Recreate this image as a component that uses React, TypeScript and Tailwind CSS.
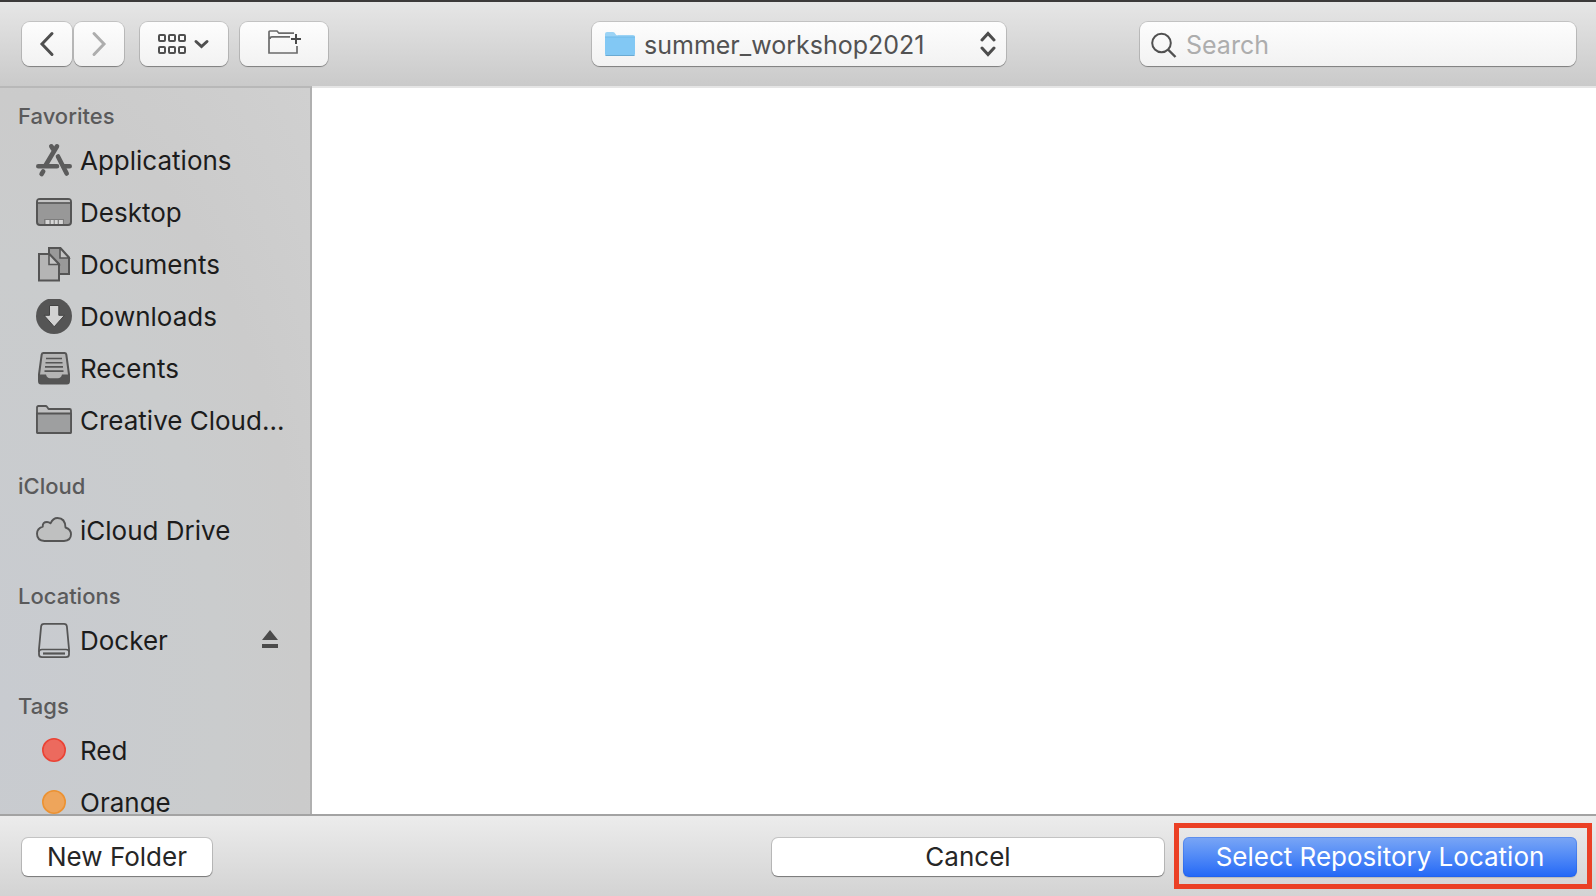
import { useState } from "react";
import type { ReactNode } from "react";

const applicationsIcon = (
  <g stroke="#5c5c5c" strokeWidth="4.6" strokeLinecap="round" fill="none">
    <path d="M21 3.3 9.5 22.5M7.2 28.4 5.6 31M15.3 3.3 17 6M22 13.5 30.7 30.5" />
    <path d="M2.3 23.3H21M27.5 23.3H33.7" />
  </g>
);

const desktopIcon = (
  <g>
    <rect x="1" y="4" width="34" height="26" rx="3" fill="#989898" stroke="#555" strokeWidth="2" />
    <path d="M2 7.2V6q0-1 1.5-1h29q1.5 0 1.5 1v1.2z" fill="#c4c4c4" />
    <path d="M1 8h34" stroke="#555" strokeWidth="1.6" />
    <rect x="8" y="24" width="20" height="5" fill="#7d7d7d" />
    <path d="M9.5 25h4v4h-4zM14.7 25h3v4h-3zM18.7 25h3v4h-3zM22.9 25h4v4h-4z" fill="#d6d6d6" />
  </g>
);

const documentsIcon = (
  <g stroke="#555" strokeWidth="2" strokeLinejoin="miter">
    <path d="M13 1h11.5L33 10.5V27H13z" fill="#999" />
    <path d="M24 1v10h9z" fill="#c4c4c4" strokeWidth="1.6" />
    <path d="M3 7h10.5L23 17v16.5H3z" fill="#b5b5b5" />
    <path d="M13 7v10.5h10z" fill="#c4c4c4" strokeWidth="1.6" />
  </g>
);

const downloadsIcon = (
  <g>
    <circle cx="18" cy="17" r="18" fill="#555" />
    <path d="M13.500 6.500h9.300v9.800h5.700L18.200 27.800 8 16.300h5.500z" fill="#d2d2d2" stroke="#434343" strokeWidth="1" />
  </g>
);

const recentsIcon = (
  <g>
    <path d="M7.5 2h21q1.500 0 1.800 1.500L33 23.500V30q0 2.500-2 2.500H5q-2 0-2-2.500v-6.500L5.700 3.500Q6 2 7.500 2z" fill="#b5b5b5" stroke="#555" strokeWidth="2" strokeLinejoin="round" />
    <path d="M3 23.500h7q1 3.800 4 3.800h8q3 0 4-3.800h7V30q0 2.500-2 2.500H5q-2 0-2-2.500z" fill="#555" />
    <path d="M10 7.500h16M9.500 11.700h17M9 15.900h18M8.500 20.100h19" stroke="#555" strokeWidth="1.6" />
  </g>
);

const folderIcon = (
  <g stroke="#555" strokeWidth="1.8" strokeLinejoin="round">
    <path d="M1 29V4.500Q1 3 2.500 3h7q1 0 1.700 1l1.300 2h21Q35 6 35 7.500V29q0 1-1 1H2q-1 0-1-1z" fill="#c0c0c1" />
    <path d="M1 29V10.500h34V29q0 1-1 1H2q-1 0-1-1z" fill="#9e9fa0" />
  </g>
);

const cloudIcon = (
  <path d="M8.5 28Q1 27.500 1 20.700q0-5 5.700-7Q6.500 9 11 9q2 0 3.500 1.300Q17 5 21.500 5q7.700 0 8 9.500Q35 16.500 35 21.300q0 6.200-7 6.700z" fill="#bfc0c0" stroke="#555" strokeWidth="1.9" strokeLinejoin="round" />
);

const driveIcon = (
  <g fill="none" stroke="#555" strokeWidth="1.8">
    <path d="M8 .9h20q2.600 0 2.900 2.600L33 26v5.500q0 2.700-3 2.700H6q-3 0-3-2.700V26L5.100 3.500Q5.400.9 8 .9z" />
    <path d="M3 29q0-2.500 3-2.500h24q3 0 3 2.500" strokeWidth="1.5" />
    <path d="M7 30.500h22" strokeWidth="2.2" />
  </g>
);

const redTag = <circle cx="18" cy="17" r="11.2" fill="#ec6a5e" stroke="#ea4335" strokeWidth="1.6" />;
const orangeTag = <circle cx="18" cy="17" r="11.2" fill="#eea55b" stroke="#ec9232" strokeWidth="1.6" />;

type Item = { name: string; icon: ReactNode; eject?: boolean };

const sections: { title: string; items: Item[] }[] = [
  {
    title: "Favorites",
    items: [
      { name: "Applications", icon: applicationsIcon },
      { name: "Desktop", icon: desktopIcon },
      { name: "Documents", icon: documentsIcon },
      { name: "Downloads", icon: downloadsIcon },
      { name: "Recents", icon: recentsIcon },
      { name: "Creative Cloud...", icon: folderIcon }
    ]
  },
  { title: "iCloud", items: [{ name: "iCloud Drive", icon: cloudIcon }] },
  { title: "Locations", items: [{ name: "Docker", icon: driveIcon, eject: true }] },
  {
    title: "Tags",
    items: [
      { name: "Red", icon: redTag },
      { name: "Orange", icon: orangeTag }
    ]
  }
];

const control =
  "rounded-lg bg-gradient-to-b from-[#fdfdfd] to-[#f2f2f2] shadow-[0_0_0_1px_rgba(0,0,0,0.13),0_1px_1px_rgba(0,0,0,0.3)]";
const pushButton =
  "h-[38px] rounded-md bg-white text-[#262626] shadow-[0_0_0_1px_rgba(0,0,0,0.15),0_1px_1px_rgba(0,0,0,0.35)]";

function Toolbar() {
  const [query, setQuery] = useState("");

  return (
    <header className="grid h-[86px] shrink-0 grid-cols-[1fr_414px_1fr] items-center border-t-2 border-[#3c3a3a] bg-gradient-to-b from-[#e6e6e6] to-[#cacaca] pr-5 pl-[22px]">
      <div className="flex">
        <button aria-label="Back" className={`flex h-11 w-[50px] items-center justify-center ${control}`}>
          <svg width="16" height="26" fill="none" stroke="#4f4f4f" strokeWidth="3" strokeLinecap="round">
            <path d="M13 2.500 3 13l10 10.500" />
          </svg>
        </button>
        <button aria-label="Forward" className={`ml-0.5 flex h-11 w-[50px] items-center justify-center ${control}`}>
          <svg width="16" height="26" fill="none" stroke="#adadad" strokeWidth="3" strokeLinecap="round">
            <path d="M3 2.500 13 13 3 23.500" />
          </svg>
        </button>
        <button aria-label="View options" className={`ml-4 flex h-11 w-[88px] items-center justify-center ${control}`}>
          <svg width="52" height="20" fill="none" stroke="#4f4f4f" strokeWidth="2">
            {[1, 11, 21].map((x) => (
              <g key={x}>
                <rect x={x} y="1" width="6" height="6" rx="1" />
                <rect x={x} y="13" width="6" height="6" rx="1" />
              </g>
            ))}
            <path d="m38 7.500 5.500 5 5.500-5" strokeWidth="3" strokeLinecap="round" />
          </svg>
        </button>
        <button aria-label="Create folder" className={`ml-3 flex h-11 w-[88px] items-center justify-center ${control}`}>
          <svg width="34" height="28" fill="none" stroke="#6b6b6b" strokeWidth="1.7">
            <path d="M27 3.200H12L10 1H3Q2 1 2 2v21h28v-7M3 9q0-2.200 2-2.200h18" />
            <path d="M29 4v10M24 9h10" stroke="#4a4a4a" strokeWidth="2" />
          </svg>
        </button>
      </div>
      <div className="relative">
        <select
          aria-label="Current folder"
          className={`block h-11 w-full appearance-none pt-0.5 pr-10 pl-[52px] text-[25px] text-[#525252] ${control}`}
        >
          <option>summer_workshop2021</option>
        </select>
        <svg className="pointer-events-none absolute top-2.5 left-[13px]" width="30" height="25">
          <path d="M0 22V2Q0 0 2 0h6q1.500 0 2.500 2t2.500 1h15q2 0 2 2v17z" fill="#9bd3f5" />
          <path d="M0 5h30v17q0 2-2 2H2q-2 0-2-2z" fill="#82c8f4" />
          <path d="M0 5h30" stroke="#6fb9e8" />
          <path d="M.5 23.500h29" stroke="#6aaad2" />
        </svg>
        <svg className="pointer-events-none absolute top-[9px] right-2.5" width="16" height="26" fill="none" stroke="#4c4c4c" strokeWidth="3" strokeLinecap="round">
          <path d="M2 9l6-6.500L14 9M2 17l6 6.500L14 17" />
        </svg>
      </div>
      <div className="relative w-[436px] justify-self-end">
        <svg className="pointer-events-none absolute top-[10px] left-[11px]" width="26" height="26" fill="none" stroke="#505050" strokeWidth="2">
          <circle cx="10.5" cy="11" r="9.3" />
          <path d="m17 17.500 7.500 7.500" strokeWidth="2.4" />
        </svg>
        <input
          type="search"
          aria-label="Search"
          placeholder="Search"
          value={query}
          onChange={(e) => setQuery(e.target.value)}
          className={`block h-11 w-full appearance-none pt-0.5 pr-3 pl-[46px] text-[25px] text-[#525252] placeholder:text-[#adadad] ${control}`}
        />
      </div>
    </header>
  );
}

function Sidebar() {
  return (
    <nav className="flex w-[312px] shrink-0 flex-col gap-5 overflow-hidden border-t-2 border-r-2 border-t-[#b8b8b8] border-r-[#b0b0b0] bg-[radial-gradient(ellipse_at_0%_85%,#c8cbd0_0%,#cacccd_50%,#cbcbcb_70%,#d0d0d0_100%)] pt-[9px]">
      {sections.map((section) => (
        <section key={section.title}>
          <h2 className="pl-[18px] text-[22px] leading-[38px] font-medium text-[#5a5a5b]">{section.title}</h2>
          <ul>
            {section.items.map((item) => (
              <li key={item.name} className="flex h-[52px] items-center pr-8 pl-9">
                <button className="flex flex-1 items-center gap-2 text-left whitespace-nowrap">
                  <svg className="shrink-0" width="36" height="36">
                    {item.icon}
                  </svg>
                  {item.name}
                </button>
                {item.eject && (
                  <button aria-label={`Eject ${item.name}`}>
                    <svg width="16" height="22" fill="#4b4b4b">
                      <path d="M8 0l8 10H0zM0 14h16v4H0z" />
                    </svg>
                  </button>
                )}
              </li>
            ))}
          </ul>
        </section>
      ))}
    </nav>
  );
}

function Footer() {
  return (
    <footer className="flex h-[82px] shrink-0 items-center border-t-2 border-[#a3a3a3] bg-gradient-to-b from-[#ececec] to-[#d3d3d3] pt-0.5 pr-[19px] pl-[22px]">
      <button className={`w-[190px] ${pushButton}`}>New Folder</button>
      <button className={`ml-auto w-[392px] ${pushButton}`}>Cancel</button>
      <div className="relative ml-[19px] w-[394px]">
        <button className="block h-10 w-full rounded-md bg-gradient-to-b from-[#7aa6f5] to-[#2267f6] text-white shadow-[inset_0_0_0_1px_rgba(30,90,220,0.3),0_1px_1px_rgba(0,0,0,0.15)]">
          Select Repository Location
        </button>
        <div className="pointer-events-none absolute -top-3.5 -right-[15px] -bottom-3 -left-[9px] border-5 border-[#eb4025]" />
      </div>
    </footer>
  );
}

export default function App() {
  return (
    <div className="flex h-screen flex-col overflow-hidden font-['Inter',sans-serif] text-[26px] leading-8 text-[#1c1c1c]">
      <Toolbar />
      <div className="flex min-h-0 flex-1">
        <Sidebar />
        <main className="flex-1 border-t-2 border-[#e5e5e5] bg-white" />
      </div>
      <Footer />
    </div>
  );
}
